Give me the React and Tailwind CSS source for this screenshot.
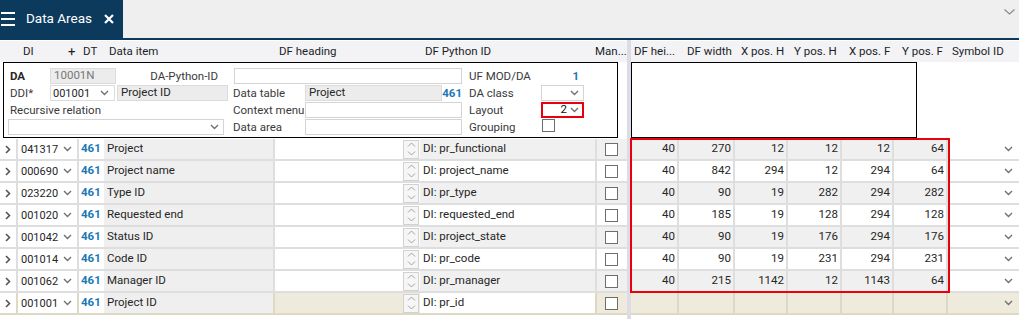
import React from "react";

const Chev = () => (
  <svg width="9" height="6" viewBox="0 0 9 6" className="shrink-0">
    <path d="M1 1L4.5 4.5L8 1" fill="none" stroke="#707070" strokeWidth="1.4" />
  </svg>
);

const RowArrow = () => (
  <svg width="6" height="9" viewBox="0 0 6 9">
    <path d="M1 1L4.5 4.5L1 8" fill="none" stroke="#555" strokeWidth="1.6" />
  </svg>
);

const Spinner = () => (
  <div className="w-[16px] h-[19px] border border-[#d2d2d2] bg-[#f6f6f6] flex flex-col">
    <div className="flex-1 flex items-center justify-center">
      <svg width="9" height="5" viewBox="0 0 9 5">
        <path d="M1 4.5L4.5 1L8 4.5" fill="none" stroke="#a0a0a0" strokeWidth="1" />
      </svg>
    </div>
    <div className="flex-1 flex items-center justify-center">
      <svg width="9" height="5" viewBox="0 0 9 5">
        <path d="M1 0.5L4.5 4L8 0.5" fill="none" stroke="#a0a0a0" strokeWidth="1" />
      </svg>
    </div>
  </div>
);

const Checkbox = () => (
  <div className="w-[13px] h-[13px] border border-[#6e6e6e] bg-white" />
);

const rows = [
  { di: "041317", item: "Project", py: "DI: pr_functional", v: [40, 270, 12, 12, 12, 64] },
  { di: "000690", item: "Project name", py: "DI: project_name", v: [40, 842, 294, 12, 294, 64] },
  { di: "023220", item: "Type ID", py: "DI: pr_type", v: [40, 90, 19, 282, 294, 282] },
  { di: "001020", item: "Requested end", py: "DI: requested_end", v: [40, 185, 19, 128, 294, 128] },
  { di: "001042", item: "Status ID", py: "DI: project_state", v: [40, 90, 19, 176, 294, 176] },
  { di: "001014", item: "Code ID", py: "DI: pr_code", v: [40, 90, 19, 231, 294, 231] },
  { di: "001062", item: "Manager ID", py: "DI: pr_manager", v: [40, 215, 1142, 12, 1143, 64] },
  { di: "001001", item: "Project ID", py: "DI: pr_id", v: ["", "", "", "", "", ""], isNew: true },
];

const numWidths = ["w-[48px]", "w-[56px]", "w-[53px]", "w-[54px]", "w-[52px]", "w-[54px]"];

function LeftRow({ r, i }) {
  const alt = r.isNew ? "bg-[#efebdc]" : i % 2 === 0 ? "bg-[#f0f0f0]" : "bg-white";
  const heading = r.isNew ? "bg-[#efebdc]" : "bg-white";
  const py = r.isNew ? "bg-white" : alt;
  const line = r.isNew ? "border-[#ddd9c4]" : "border-[#dedede]";
  return (
    <div className={`flex h-[22px] border-b-2 ${line}`}>
      <div className={`w-[18px] flex items-center pl-[5px] border-r-2 ${line} bg-white`}>
        <RowArrow />
      </div>
      <div className={`w-[61px] flex items-center justify-between pl-[3px] pr-[5px] border-r-2 ${line} bg-white`}>
        <span className="text-[11px]">{r.di}</span>
        <Chev />
      </div>
      <div className="w-[25px] flex items-center pl-[2px] bg-white font-bold text-[#1b78b5]">461</div>
      <div className={`w-[171px] flex items-center pl-[3px] border-r-2 ${line} bg-[#efefef]`}>{r.item}</div>
      <div className={`w-[127px] ${heading}`} />
      <div className={`w-[18px] flex items-center pl-[1px] ${heading}`}>
        <Spinner />
      </div>
      <div className={`w-[177px] flex items-center pl-[3px] border-r-2 ${line} ${py}`}>{r.py}</div>
      <div className={`w-[30px] flex items-center pl-[8px] ${alt}`}>
        <Checkbox />
      </div>
    </div>
  );
}

function RightRow({ r, i }) {
  const alt = r.isNew ? "bg-[#efebdc]" : i % 2 === 0 ? "bg-[#f0f0f0]" : "bg-white";
  const sym = r.isNew ? "bg-[#efebdc]" : "bg-white";
  const line = r.isNew ? "border-[#ddd9c4]" : "border-[#dedede]";
  return (
    <div className={`flex h-[22px] border-b-2 ${line}`}>
      {r.v.map((val, k) => (
        <div key={k} className={`${numWidths[k]} flex items-center justify-end pr-[2px] border-r-2 ${line} ${alt}`}>
          {val}
        </div>
      ))}
      <div className={`flex-1 flex items-center justify-end pr-[6px] ${sym}`}>
        <Chev />
      </div>
    </div>
  );
}

const Label = ({ w, children, className = "" }) => (
  <div className={`${w} whitespace-nowrap text-[#3a3a3a] ${className}`}>{children}</div>
);

export default function App() {
  return (
    <div className="relative w-[1019px] h-[319px] overflow-hidden bg-white text-[11.5px] leading-none text-[#262626] font-[family-name:Roboto,sans-serif]">
      {/* tab bar */}
      <div className="flex h-[38px] bg-[#efefef]">
        <div className="w-[123px] bg-[#0b3a5d] flex items-center">
          <div className="ml-[1px] flex flex-col gap-[4px]">
            <div className="w-[14px] h-[2px] bg-white" />
            <div className="w-[14px] h-[2px] bg-white" />
            <div className="w-[14px] h-[2px] bg-white" />
          </div>
          <div className="ml-[11px] text-[13.5px] text-white">Data Areas</div>
          <svg width="10" height="10" viewBox="0 0 10 10" className="ml-[12px]">
            <path d="M1 1L9 9M9 1L1 9" stroke="white" strokeWidth="2.2" />
          </svg>
        </div>
        <div className="ml-auto mr-[4px] mt-[9px]">
          <svg width="11" height="6" viewBox="0 0 11 6">
            <path d="M0.5 0.5L5.5 5L10.5 0.5" fill="none" stroke="#8a8a8a" strokeWidth="1.2" />
          </svg>
        </div>
      </div>
      <div className="h-[2px] bg-[#0b3a5d]" />

      <div className="flex h-[279px]">
        {/* left frozen pane */}
        <div className="w-[627px]">
          <div className="h-[22px] border-t border-white bg-[#f3f3f5] flex items-center text-[#1d1d26]">
            <div className="w-[23px]" />
            <div className="w-[45px]">DI</div>
            <div className="w-[15px] text-[13px]">+</div>
            <div className="w-[26px]">DT</div>
            <div className="w-[170px]">Data item</div>
            <div className="w-[146px]">DF heading</div>
            <div className="w-[170px]">DF Python ID</div>
            <div className="flex-1">Man...</div>
          </div>

          {/* form */}
          <div className="ml-[3px] w-[615px] h-[76px] border border-black pt-[5px]">
            <div className="flex h-[17px] items-start">
              <div className="w-[6px]" />
              <div className="w-[40px] font-bold leading-[16px]">DA</div>
              <div className="w-[66px] h-[16px] bg-[#ececec] border border-[#dcdcdc] pl-[3px] flex items-center text-[#777]">10001N</div>
              <Label w="w-[112px]" className="text-right pr-[10px] leading-[16px]">DA-Python-ID</Label>
              <div className="w-[6px]" />
              <div className="w-[228px] h-[16px] bg-white border border-[#d4d4d4]" />
              <div className="w-[7px]" />
              <Label w="w-[72px]" className="leading-[16px]">UF MOD/DA</Label>
              <div className="w-[43px] text-right pr-[5px] font-bold text-[#1b78b5] leading-[16px]">1</div>
            </div>
            <div className="flex h-[17px] items-start">
              <div className="w-[6px]" />
              <Label w="w-[40px]" className="leading-[16px]">DDI*</Label>
              <div className="w-[65px] h-[16px] bg-white border border-[#dcdcdc] pl-[2px] pr-[5px] flex items-center justify-between">
                <span className="text-[11px]">001001</span>
                <Chev />
              </div>
              <div className="w-[2px]" />
              <div className="w-[111px] h-[16px] bg-[#ececec] border border-[#dcdcdc] pl-[3px] flex items-center">Project ID</div>
              <div className="w-[5px]" />
              <Label w="w-[72px]" className="leading-[16px]">Data table</Label>
              <div className="w-[137px] h-[16px] bg-[#ececec] border border-[#dcdcdc] pl-[3px] flex items-center">Project</div>
              <div className="w-[20px] text-right font-bold text-[#1b78b5] leading-[16px]">461</div>
              <div className="w-[7px]" />
              <Label w="w-[72px]" className="leading-[16px]">DA class</Label>
              <div className="w-[43px] h-[16px] bg-white border border-[#d4d4d4] flex items-center justify-end pr-[4px]">
                <Chev />
              </div>
            </div>
            <div className="flex h-[17px] items-start">
              <div className="w-[6px]" />
              <Label w="w-[223px]" className="leading-[16px]">Recursive relation</Label>
              <Label w="w-[72px]" className="leading-[16px]">Context menu</Label>
              <div className="w-[157px] h-[16px] bg-white border border-[#d4d4d4]" />
              <div className="w-[7px]" />
              <Label w="w-[72px]" className="leading-[16px]">Layout</Label>
              <div className="w-[43px] h-[16px] bg-white border-2 border-[#e8000b] flex items-center justify-end gap-[3px] pr-[3px]">
                <span className="text-[#111]">2</span>
                <Chev />
              </div>
            </div>
            <div className="flex h-[17px] items-start">
              <div className="w-[4px]" />
              <div className="w-[216px] h-[16px] bg-white border border-[#d4d4d4] flex items-center justify-end pr-[4px]">
                <Chev />
              </div>
              <div className="w-[9px]" />
              <Label w="w-[72px]" className="leading-[16px]">Data area</Label>
              <div className="w-[157px] h-[16px] bg-white border border-[#d4d4d4]" />
              <div className="w-[7px]" />
              <Label w="w-[73px]" className="leading-[16px]">Grouping</Label>
              <Checkbox />
            </div>
          </div>

          <div className="mt-[1px]">
            {rows.map((r, i) => (
              <LeftRow key={i} r={r} i={i} />
            ))}
          </div>
        </div>

        {/* divider */}
        <div className="w-[4px] bg-[#dddce6]" />

        {/* right pane */}
        <div className="flex-1">
          <div className="h-[22px] border-t border-white bg-[#f3f3f5] flex items-center text-[#1d1d26] pl-[3px]">
            <div className="w-[53px] whitespace-nowrap">DF hei...</div>
            <div className="w-[54px] whitespace-nowrap">DF width</div>
            <div className="w-[53px] whitespace-nowrap">X pos. H</div>
            <div className="w-[55px] whitespace-nowrap">Y pos. H</div>
            <div className="w-[53px] whitespace-nowrap">X pos. F</div>
            <div className="w-[50px] whitespace-nowrap">Y pos. F</div>
            <div className="whitespace-nowrap">Symbol ID</div>
          </div>
          <div className="w-[286px] h-[76px] border border-black" />
          <div className="mt-[1px]">
            {rows.map((r, i) => (
              <RightRow key={i} r={r} i={i} />
            ))}
          </div>
        </div>
      </div>

      {/* highlight overlay */}
      <div className="absolute top-[138px] left-[630px] w-[320px] h-[155px] border-2 border-[#e8000b] pointer-events-none" />
    </div>
  );
}
